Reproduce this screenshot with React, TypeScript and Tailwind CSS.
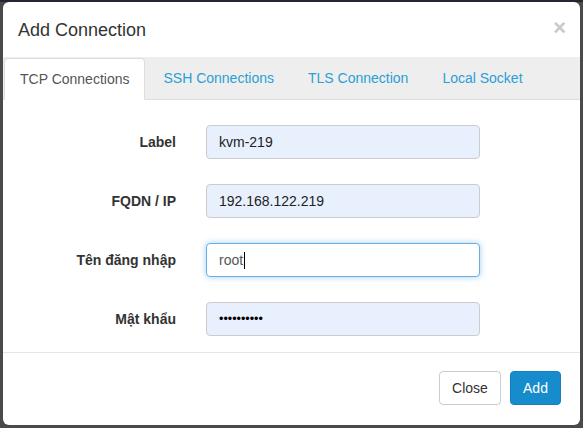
export default function App() {
  const fields = [
    { label: "Label", value: "kvm-219", kind: "filled" },
    { label: "FQDN / IP", value: "192.168.122.219", kind: "filled" },
    { label: "Tên đăng nhập", value: "root", kind: "focus" },
    { label: "Mật khẩu", value: "••••••••••", kind: "password" },
  ];

  const tabs = ["TCP Connections", "SSH Connections", "TLS Connection", "Local Socket"];

  return (
    <div className="w-[583px] h-[428px] bg-[#4a4a4a] overflow-hidden font-['Liberation_Sans',Arial,sans-serif] text-[#333]">
      <div className="h-[2px] bg-[#2b2232]" />
      <div className="ml-[3px] w-[577px] h-[423px] bg-white rounded-md flex flex-col overflow-hidden">
        {/* Header */}
        <div className="h-[55px] flex items-center justify-between pl-[15px] pr-[14px]">
          <h4 className="text-[18px] text-[#333] leading-none pt-[1px]">Add Connection</h4>
          <span className="text-[22px] font-bold text-[#c9c9c9] leading-none mt-[-4px]">×</span>
        </div>

        {/* Tabs */}
        <div className="h-[43px] bg-[#eeeeee] border-b border-[#dddddd] flex items-end pl-[1px]">
          {tabs.map((t, i) =>
            i === 0 ? (
              <div
                key={t}
                className="h-[42px] mb-[-1px] bg-white border border-[#dddddd] border-b-white rounded-t-[4px] px-[15px] flex items-center text-[14px] text-[#555] mr-[2px]"
              >
                {t}
              </div>
            ) : (
              <div key={t} className="h-[41px] px-[16px] flex items-center text-[14px] text-[#2a9fd6] mr-[2px]">
                {t}
              </div>
            )
          )}
        </div>

        {/* Body */}
        <div className="pt-[25px] pb-[16px] flex flex-col gap-[25px] border-b border-[#e5e5e5]">
          {fields.map((f) => (
            <div key={f.label} className="flex items-center">
              <div className="w-[173px] text-right text-[14px] font-bold text-[#333]">{f.label}</div>
              <div
                className={`ml-[30px] w-[274px] h-[34px] rounded-[4px] flex items-center px-[12px] text-[14px] ${
                  f.kind === "focus"
                    ? "bg-white border border-[#66afe9] shadow-[0_0_6px_rgba(102,175,233,0.6)] text-[#555]"
                    : "bg-[#e8f0fe] border border-[#cccccc] text-[#222]"
                }`}
              >
                {f.kind === "password" ? (
                  <span className="text-[12.5px] leading-none text-black">{f.value}</span>
                ) : (
                  <span>{f.value}</span>
                )}
                {f.kind === "focus" && <span className="w-px h-[17px] bg-black ml-[1px]" />}
              </div>
            </div>
          ))}
        </div>

        {/* Footer */}
        <div className="flex-1 flex items-center justify-end gap-[9px] pr-[19px] pb-[2px]">
          <button className="h-[34px] w-[62px] rounded-[4px] border border-[#cccccc] bg-white text-[14px] text-[#333]">
            Close
          </button>
          <button className="h-[34px] w-[51px] rounded-[4px] border border-[#1580bd] bg-[#168ccc] text-[14px] text-white">
            Add
          </button>
        </div>
      </div>
    </div>
  );
}
